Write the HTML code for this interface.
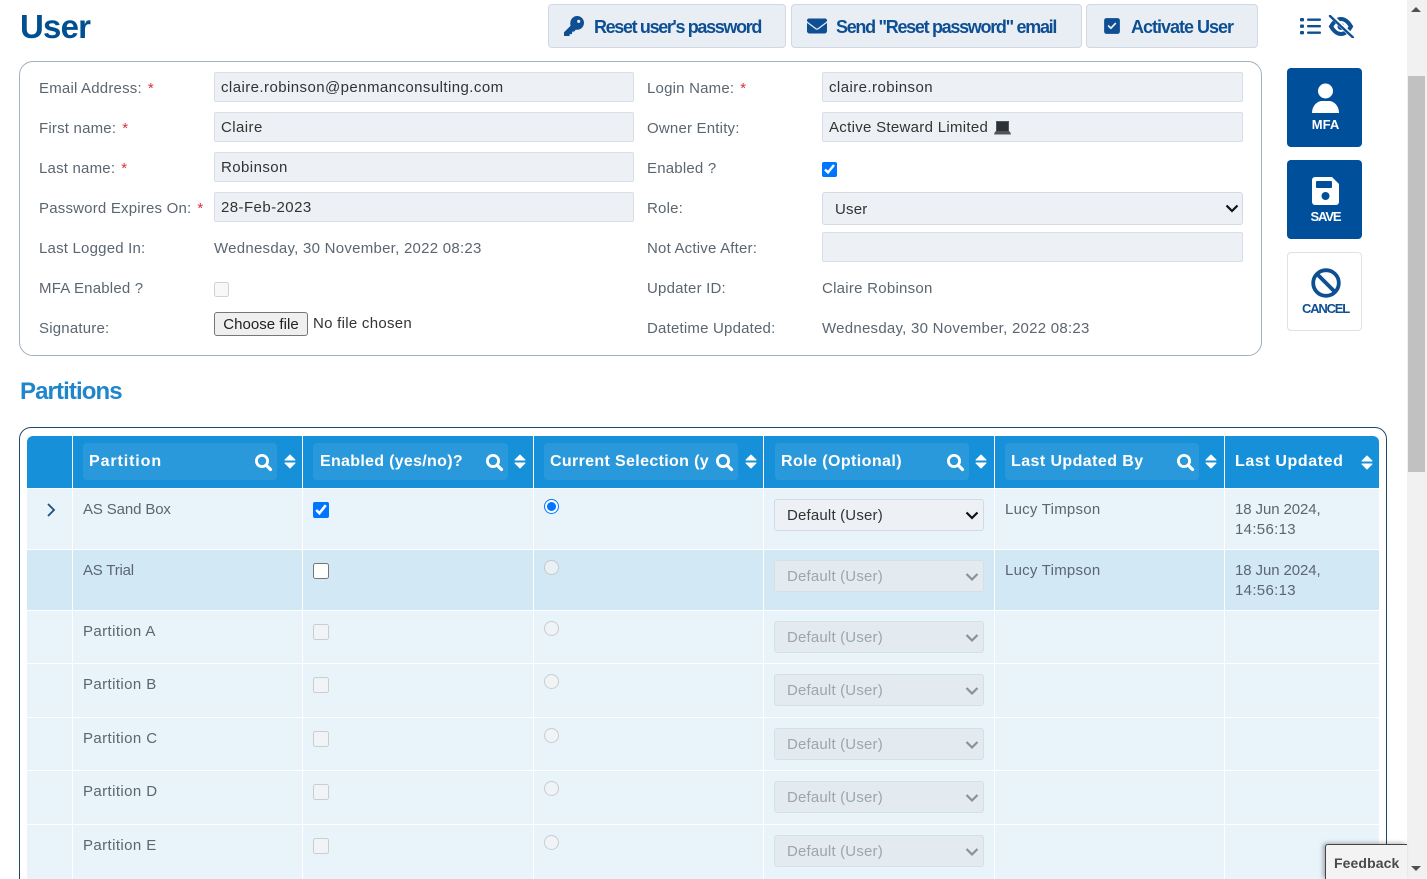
<!DOCTYPE html>
<html lang="en"><head><meta charset="utf-8"><title>User</title>
<style>
html,body{margin:0;padding:0;background:#fff;width:1427px;height:879px;overflow:hidden}
#p{position:relative;width:1427px;height:879px;overflow:hidden;font-family:"Liberation Sans",sans-serif;font-size:15px;color:#5b6670}
.a,.t{position:absolute}
.t{white-space:nowrap;line-height:20px;letter-spacing:.2px}
.v{letter-spacing:.26px}
.r{color:#e0303c;margin-left:6px}
input.f{position:absolute;box-sizing:border-box;height:30px;width:420px;background:#edf0f5;border:1px solid #d8dee7;border-radius:2px;padding:0 6px;font:15px "Liberation Sans",sans-serif;letter-spacing:.43px;color:#333;margin:0;outline:0}
select{position:absolute;box-sizing:border-box;margin:0;font:15px "Liberation Sans",sans-serif;letter-spacing:.18px;background:#edf0f5;border:1px solid #d3dae3;border-radius:3px;color:#333;padding:0 8px 0 12px;outline:0;appearance:none;-webkit-appearance:none;left:774px;width:210px;height:32px}
select:disabled{color:#9ca6ae;opacity:1;background:#e3ebf1;border-color:#d5dfe7}
input[type=checkbox],input[type=radio]{position:absolute;margin:0;width:16px;height:16px}
input[type=radio]{left:544px;width:15px;height:15px}
.ck{left:313px}
.btn{position:absolute;top:4px;height:44px;box-sizing:border-box;background:#e9eef5;border:1px solid #cfd8e3;border-radius:4px;color:#0d4f92;font-weight:bold;font-size:18px;line-height:44px;white-space:nowrap}
.btn svg{position:absolute;top:11px}
.btn span{position:absolute;top:0}
.act{position:absolute;left:1287px;width:75px;height:79px;box-sizing:border-box;border-radius:4px;background:#004f9b;color:#fff;font-weight:bold;font-size:13px;text-align:center}
.act span{position:absolute;left:1px;right:-1px;top:49px;line-height:16px}
.h{position:absolute;top:436px;height:52px;background:#1690d9}
.pill{position:absolute;top:443px;height:37px;background:#2a99dc;border-radius:4px}
.ht{position:absolute;top:452px;line-height:20px;font-weight:bold;font-size:16px;color:#fff;letter-spacing:.35px;white-space:nowrap}
.row{position:absolute;left:27px;width:1352px}
.sep{position:absolute;top:489px;height:390px;width:1px;background:#fff}
</style></head><body><div id="p">

<div class="t" style="left:20px;top:7px;font-size:33px;line-height:40px;font-weight:bold;color:#004f92;letter-spacing:-.8px">User</div>

<div class="btn" style="left:548px;width:238px"><svg width="20" height="20" viewBox="0 0 512 512" style="left:15px" fill="#0d4f92"><path d="M512 176c0 97-79 176-176 176-11 0-22-1-33-3l-39 44c-5 5-11 8-18 8h-38v40c0 13-11 24-24 24h-40v40c0 13-11 24-24 24H24c-13 0-24-11-24-24v-78c0-6 3-12 7-17l162-162c-6-17-9-34-9-52C160 79 239 0 336 0s176 79 176 176zM376 96a40 40 0 1 0 0 80 40 40 0 1 0 0-80z"/></svg><span style="left:45px;letter-spacing:-1.35px">Reset user's password</span></div>
<div class="btn" style="left:791px;width:291px"><svg width="20" height="20" viewBox="0 0 512 512" style="left:15px" fill="#0d4f92"><path d="M48 64C21 64 0 85 0 112c0 15 7 29 19 38l218 163c11 9 27 9 38 0l218-163c12-9 19-23 19-38 0-27-21-48-48-48H48zM0 176v208c0 35 29 64 64 64h384c35 0 64-29 64-64V176L294 339c-23 17-53 17-76 0L0 176z"/></svg><span style="left:44px;letter-spacing:-1.3px">Send "Reset password" email</span></div>
<div class="btn" style="left:1086px;width:172px"><svg width="18" height="18" viewBox="0 0 448 512" style="left:16px;top:12px" fill="#0d4f92"><path d="M64 32C29 32 0 61 0 96v320c0 35 29 64 64 64h320c35 0 64-29 64-64V96c0-35-29-64-64-64H64zm273 169L209 337c-9 10-25 10-35 0l-64-64c-9-9-9-25 0-34s25-9 34 0l47 47 112-119c9-10 24-10 34-1s10 25 1 35z"/></svg><span style="left:44px;letter-spacing:-1px">Activate User</span></div>

<svg class="a" style="left:1300px;top:17px" width="21" height="19" viewBox="0 0 21 19" fill="#0d4f92"><rect x="0" y="1" width="4" height="3.4" rx="1"/><rect x="0" y="7.5" width="4" height="3.4" rx="1"/><rect x="0" y="14" width="4" height="3.4" rx="1"/><rect x="7" y="1.5" width="14" height="2.4" rx="1"/><rect x="7" y="8" width="14" height="2.4" rx="1"/><rect x="7" y="14.500" width="14" height="2.400" rx="1"/></svg>
<svg class="a" style="left:1328px;top:15px" width="26" height="23" viewBox="0 0 26 23"><path d="M3 11.500C6 6.500 9.500 4 13 4S20 6.500 23 11.500C20 16.500 16.500 19 13 19S6 16.500 3 11.500Z" fill="none" stroke="#0d4f92" stroke-width="4"/><circle cx="13" cy="11.500" r="3.500" fill="#0d4f92"/><path d="M3 0.500L25 22" stroke="#fff" stroke-width="4.500"/><path d="M2 1L25 22.500" stroke="#0d4f92" stroke-width="2.400" stroke-linecap="round"/></svg>

<div class="a" style="left:19px;top:61px;width:1243px;height:295px;box-sizing:border-box;border:1px solid #a3b0bd;border-radius:14px"></div>

<div class="t" style="left:39px;top:79px">Email Address:<span class="r">*</span></div>
<input class="f" style="left:214px;top:72px" value="claire.robinson@penmanconsulting.com">
<div class="t" style="left:39px;top:119px">First name:<span class="r">*</span></div>
<input class="f" style="left:214px;top:112px" value="Claire">
<div class="t" style="left:39px;top:159px">Last name:<span class="r">*</span></div>
<input class="f" style="left:214px;top:152px" value="Robinson">
<div class="t" style="left:39px;top:199px">Password Expires On:<span class="r">*</span></div>
<input class="f" style="left:214px;top:192px" value="28-Feb-2023">
<div class="t" style="left:39px;top:239px">Last Logged In:</div>
<div class="t v" style="left:214px;top:239px">Wednesday, 30 November, 2022 08:23</div>
<div class="t" style="left:39px;top:279px">MFA Enabled ?</div>
<input type="checkbox" disabled style="left:214px;top:282px;width:15px;height:15px">
<div class="t" style="left:39px;top:319px">Signature:</div>
<div class="a" style="left:214px;top:312px;width:94px;height:24px;box-sizing:border-box;background:#efefef;border:1px solid #767676;border-radius:3px;color:#222;text-align:center;line-height:24px;font-size:15px;letter-spacing:.05px">Choose file</div>
<div class="t" style="left:313px;top:314px;color:#333;letter-spacing:.28px">No file chosen</div>

<div class="t" style="left:647px;top:79px">Login Name:<span class="r">*</span></div>
<input class="f" style="left:822px;top:72px;width:421px" value="claire.robinson">
<div class="t" style="left:647px;top:119px">Owner Entity:</div>
<input class="f" style="left:822px;top:112px;width:421px;letter-spacing:.3px" value="Active Steward Limited">
<svg class="a" style="left:994px;top:121px" width="17" height="14" viewBox="0 0 17 14"><rect x="2.500" y="0.500" width="12" height="10" fill="#2c3138" stroke="#555"/><path d="M1 10.500h15l1 3H0z" fill="#555"/></svg>
<div class="t" style="left:647px;top:159px">Enabled ?</div>
<input type="checkbox" checked style="left:822px;top:162px;width:15px;height:15px">
<div class="t" style="left:647px;top:199px">Role:</div>
<select style="left:822px;top:192px;width:421px;height:33px;padding-top:2px"><option>User</option></select>
<div class="t" style="left:647px;top:239px">Not Active After:</div>
<input class="f" style="left:822px;top:232px;width:421px" value="">
<div class="t" style="left:647px;top:279px">Updater ID:</div>
<div class="t v" style="left:822px;top:279px">Claire Robinson</div>
<div class="t" style="left:647px;top:319px">Datetime Updated:</div>
<div class="t v" style="left:822px;top:319px">Wednesday, 30 November, 2022 08:23</div>

<div class="act" style="top:68px"><svg class="a" style="left:25px;top:15px" width="27" height="30" viewBox="0 0 27 30" fill="#fff"><circle cx="13.500" cy="8" r="7.500"/><path d="M0 30c0-7 5-12 10-12h7c5 0 10 5 10 12z"/></svg><span>MFA</span></div>
<div class="act" style="top:160px"><svg class="a" style="left:25px;top:17px" width="27" height="28" viewBox="0 0 27 28"><path d="M3 0h17l7 7v18a3 3 0 0 1-3 3H3a3 3 0 0 1-3-3V3a3 3 0 0 1 3-3z" fill="#fff"/><rect x="4" y="4" width="16" height="7" rx="1" fill="#004f9b"/><circle cx="13.500" cy="19" r="4" fill="#004f9b"/></svg><span style="letter-spacing:-1.1px">SAVE</span></div>
<div class="act" style="top:252px;background:#fff;border:1px solid #dce2e8;color:#0d4f92"><svg class="a" style="left:23px;top:15px" width="30" height="30" viewBox="0 0 30 30" fill="none" stroke="#0d4f92" stroke-width="3.800"><circle cx="15" cy="15" r="12.800"/><path d="M6 6l18 18"/></svg><span style="top:48px;letter-spacing:-1.2px">CANCEL</span></div>

<div class="t" style="left:20px;top:377px;font-size:24px;line-height:30px;font-weight:bold;color:#1f86cc;letter-spacing:-.9px">Partitions</div>

<div class="a" style="left:19px;top:427px;width:1368px;height:470px;box-sizing:border-box;border:1px solid #1e4a6e;border-radius:12px"></div>

<div class="h" style="left:27px;width:45px;border-top-left-radius:6px"></div>
<div class="h" style="left:73px;width:229px"></div>
<div class="h" style="left:303px;width:230px"></div>
<div class="h" style="left:534px;width:229px"></div>
<div class="h" style="left:764px;width:230px"></div>
<div class="h" style="left:995px;width:229px"></div>
<div class="h" style="left:1225px;width:154px;border-top-right-radius:6px"></div>
<div class="pill" style="left:83px;width:194px"></div>
<div class="pill" style="left:313px;width:195px"></div>
<div class="pill" style="left:544px;width:194px"></div>
<div class="pill" style="left:775px;width:194px"></div>
<div class="pill" style="left:1005px;width:194px"></div>
<div class="ht" style="left:89px;letter-spacing:.9px">Partition</div>
<div class="ht" style="left:320px;letter-spacing:.3px">Enabled (yes/no)?</div>
<div class="ht" style="left:550px;width:160px;overflow:hidden">Current Selection (y</div>
<div class="ht" style="left:781px;letter-spacing:.42px">Role (Optional)</div>
<div class="ht" style="left:1011px;letter-spacing:.42px">Last Updated By</div>
<div class="ht" style="left:1235px;top:452px;letter-spacing:.6px">Last Updated</div>

<svg class="a" style="left:0;top:0" width="1427" height="879">
<g fill="none" stroke="#fff" stroke-width="2.800" stroke-linecap="round">
<g transform="translate(254,453)"><circle cx="8" cy="8" r="5.600"/><path d="M12.500 12.500l4 4" stroke-width="3.200"/></g>
<g transform="translate(485,453)"><circle cx="8" cy="8" r="5.600"/><path d="M12.500 12.500l4 4" stroke-width="3.200"/></g>
<g transform="translate(715,453)"><circle cx="8" cy="8" r="5.600"/><path d="M12.500 12.500l4 4" stroke-width="3.200"/></g>
<g transform="translate(946,453)"><circle cx="8" cy="8" r="5.600"/><path d="M12.500 12.500l4 4" stroke-width="3.200"/></g>
<g transform="translate(1176,453)"><circle cx="8" cy="8" r="5.600"/><path d="M12.500 12.500l4 4" stroke-width="3.200"/></g>
</g>
<g fill="#fff" stroke="#fff" stroke-width="1" stroke-linejoin="round">
<path d="M290 455l5 5h-10zM290 468l5-5h-10z"/>
<path d="M520 455l5 5h-10zM520 468l5-5h-10z"/>
<path d="M751 455l5 5h-10zM751 468l5-5h-10z"/>
<path d="M981 455l5 5h-10zM981 468l5-5h-10z"/>
<path d="M1211 455l5 5h-10zM1211 468l5-5h-10z"/>
<path d="M1367 456l5 5h-10zM1367 469l5-5h-10z"/>
</g>
</svg>

<div class="row" style="top:489px;height:60px;background:#e8f3fa"></div>
<div class="row" style="top:550px;height:60px;background:#d3e8f5"></div>
<div class="row" style="top:611px;height:52px;background:#e8f3fa"></div>
<div class="row" style="top:664px;height:53px;background:#e8f3fa"></div>
<div class="row" style="top:718px;height:52px;background:#e8f3fa"></div>
<div class="row" style="top:771px;height:53px;background:#e8f3fa"></div>
<div class="row" style="top:825px;height:54px;background:#e8f3fa"></div>
<div class="sep" style="left:72px"></div><div class="sep" style="left:302px"></div><div class="sep" style="left:533px"></div><div class="sep" style="left:763px"></div><div class="sep" style="left:994px"></div><div class="sep" style="left:1224px"></div>

<svg class="a" style="left:46px;top:503px" width="10" height="14" viewBox="0 0 10 14"><path d="M2 1l6 6-6 6" fill="none" stroke="#1d4f82" stroke-width="1.800"/></svg>

<div class="t" style="left:83px;top:500px;letter-spacing:-.13px">AS Sand Box</div>
<input class="ck" type="checkbox" checked style="top:502px">
<input type="radio" checked style="top:499px">
<select style="top:499px"><option>Default (User)</option></select>
<div class="t" style="left:1005px;top:500px;letter-spacing:.24px">Lucy Timpson</div>
<div class="t" style="left:1235px;top:500px;letter-spacing:-.1px">18 Jun 2024,</div>
<div class="t" style="left:1235px;top:520px;letter-spacing:.32px">14:56:13</div>

<div class="t" style="left:83px;top:561px;letter-spacing:-.2px">AS Trial</div>
<input class="ck" type="checkbox" style="top:563px">
<input type="radio" disabled style="top:560px">
<select disabled style="top:560px"><option>Default (User)</option></select>
<div class="t" style="left:1005px;top:561px;letter-spacing:.24px">Lucy Timpson</div>
<div class="t" style="left:1235px;top:561px;letter-spacing:-.1px">18 Jun 2024,</div>
<div class="t" style="left:1235px;top:581px;letter-spacing:.32px">14:56:13</div>

<div class="t" style="left:83px;top:622px;letter-spacing:.4px">Partition A</div>
<input class="ck" type="checkbox" disabled style="top:624px">
<input type="radio" disabled style="top:621px">
<select disabled style="top:621px"><option>Default (User)</option></select>

<div class="t" style="left:83px;top:675px;letter-spacing:.4px">Partition B</div>
<input class="ck" type="checkbox" disabled style="top:677px">
<input type="radio" disabled style="top:674px">
<select disabled style="top:674px"><option>Default (User)</option></select>

<div class="t" style="left:83px;top:729px;letter-spacing:.4px">Partition C</div>
<input class="ck" type="checkbox" disabled style="top:731px">
<input type="radio" disabled style="top:728px">
<select disabled style="top:728px"><option>Default (User)</option></select>

<div class="t" style="left:83px;top:782px;letter-spacing:.4px">Partition D</div>
<input class="ck" type="checkbox" disabled style="top:784px">
<input type="radio" disabled style="top:781px">
<select disabled style="top:781px"><option>Default (User)</option></select>

<div class="t" style="left:83px;top:836px;letter-spacing:.4px">Partition E</div>
<input class="ck" type="checkbox" disabled style="top:838px">
<input type="radio" disabled style="top:835px">
<select disabled style="top:835px"><option>Default (User)</option></select>

<svg class="a" style="left:0;top:0" width="1427" height="879" fill="none" stroke-width="2.200">
<path stroke="#111" d="M1226.500 205.500l5.500 5.500 5.500-5.500M966.500 512.500l5.500 5.500 5.500-5.500"/>
<path stroke="#87929b" d="M966.500 574l5.500 5.500 5.500-5.500M966.500 635l5.500 5.500 5.500-5.500M966.500 688l5.500 5.500 5.500-5.500M966.500 742l5.500 5.500 5.500-5.500M966.500 795l5.500 5.500 5.500-5.500M966.500 849l5.500 5.500 5.500-5.500"/>
</svg>

<div class="a" style="left:1407px;top:0;width:20px;height:879px;background:#f1f1f1"></div>
<div class="a" style="left:1408px;top:76px;width:17px;height:396px;background:#c1c1c1"></div>
<svg class="a" style="left:1407px;top:0" width="20" height="879"><path d="M9 7l5 5H4z" fill="#505050"/><path d="M4 866h10l-5 5z" fill="#505050"/></svg>

<div class="a" style="left:1325px;top:844px;width:82px;height:35px;box-sizing:border-box;background:#f3f3f3;border-left:1px solid #444;border-top:1px solid #444;box-shadow:-2px -1px 4px rgba(0,0,0,.3);font-weight:bold;font-size:14px;letter-spacing:.1px;color:#4a4a4a;line-height:37px;padding-left:8px;border-top-left-radius:3px">Feedback</div>
</div></body></html>
